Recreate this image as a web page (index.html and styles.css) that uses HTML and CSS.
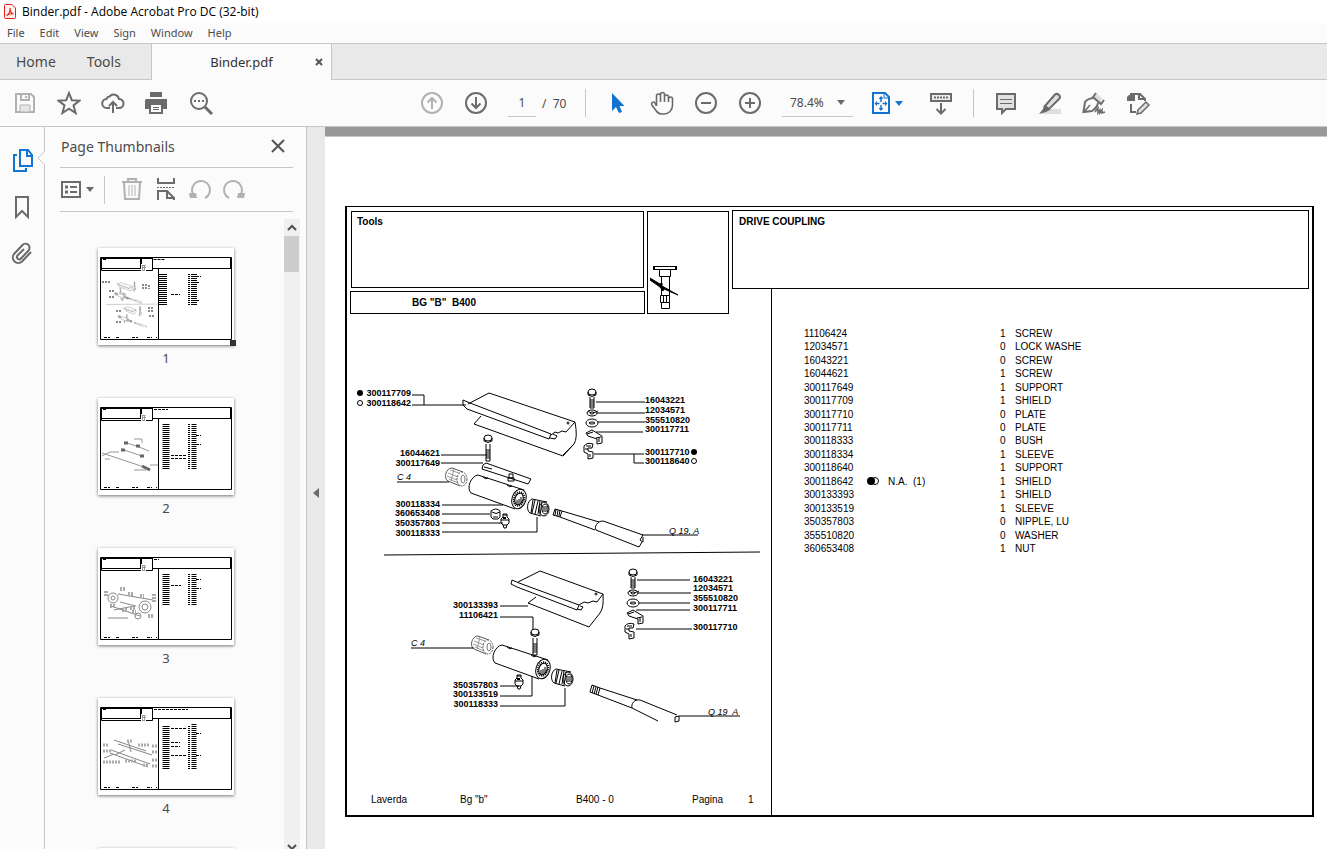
FILE: index.html
```html
<!DOCTYPE html>
<html lang="en">
<head>
    <meta charset="UTF-8">
    <meta name="viewport" content="width=device-width, initial-scale=1.0">
    <title>Binder.pdf - Adobe Acrobat Pro DC (32-bit)</title>
    <link rel="stylesheet" href="styles.css">
</head>
<body>

<header class="titlebar">
    <svg class="app-icon" width="12" height="15" viewBox="0 0 12 15" fill="none" stroke="#e2231a">
        <path d="M1.5 .5H8L11.5 4V13.5a1 1 0 0 1-1 1h-9a1 1 0 0 1-1-1v-12a1 1 0 0 1 1-1z" fill="#fff1f0"/>
        <path d="M2.5 11.5c2-1 4-4 3.500-7.500c0 3 1.500 5.500 3.500 6c-2-.5-5 0-7 1.500z" stroke-width="1.2"/>
    </svg>
    <span>Binder.pdf - Adobe Acrobat Pro DC (32-bit)</span>
</header>

<nav class="menubar">
    <button>File</button>
    <button>Edit</button>
    <button>View</button>
    <button>Sign</button>
    <button>Window</button>
    <button>Help</button>
</nav>

<div class="tabs">
    <button class="tab">Home</button>
    <button class="tab">Tools</button>
    <div class="tab-active">
        <span class="tab-name">Binder.pdf</span>
        <button class="tab-close" aria-label="Close tab">
            <svg width="8" height="8" viewBox="0 0 8 8" stroke="#555" stroke-width="2"><path d="M1 1L7 7M7 1L1 7"/></svg>
        </button>
    </div>
</div>

<div class="toolbar">
    <button class="tool off" aria-label="Save">
        <svg viewBox="0 0 24 24"><path d="M3 3H18L21 6V21H3z"/><path d="M8 3V9H16V3M13 5V7"/><path d="M7 21V14H17V21z" fill="#e6e6e6" stroke-width="1"/></svg>
    </button>
    <button class="tool" aria-label="Star">
        <svg viewBox="0 0 24 24"><path d="M12 2L14.800 9.200L22.500 9.600L16.500 14.400L18.600 22L12 17.700L5.400 22L7.500 14.400L1.500 9.600L9.200 9.200z"/></svg>
    </button>
    <button class="tool" aria-label="Upload">
        <svg viewBox="0 0 24 24"><path d="M9 17H6a4.500 4.500 0 0 1-.5-9a3.500 3.500 0 0 1 3-2.500a5.500 5.500 0 0 1 9.500 2.500a4.500 4.500 0 0 1 0 9h-3"/><path d="M12 22V11M8 15L12 11L16 15"/></svg>
    </button>
    <button class="tool" aria-label="Print">
        <svg viewBox="0 0 24 24"><path d="M5 1H17V6H5z" fill="#6b6b6b" stroke="none"/><path d="M1 8H22V18H18V14H4V18H0V9z" fill="#6b6b6b" stroke="none"/><path d="M5 13V22H17V13z" fill="#fbfbfb"/><path d="M8 16.500H14M8 18.500H14" stroke-width="1"/></svg>
    </button>
    <button class="tool" aria-label="Find">
        <svg viewBox="0 0 24 24"><circle cx="10" cy="10" r="8"/><path d="M16 16L23 23" stroke-width="3"/><path d="M5 10h2M9 10h2M13 10h2"/></svg>
    </button>

    <div class="tool-main">
        <button class="tool off" aria-label="Previous page">
            <svg viewBox="0 0 24 24"><circle cx="12" cy="12" r="10"/><path d="M12 18V7M7.500 11.500L12 7L16.500 11.500"/></svg>
        </button>
        <button class="tool" aria-label="Next page">
            <svg viewBox="0 0 24 24"><circle cx="12" cy="12" r="10"/><path d="M12 6V17M7.500 12.500L12 17L16.500 12.500"/></svg>
        </button>
        <input class="page-input" type="text" value="1" aria-label="Page number">
        <span class="page-total">/&nbsp; 70</span>
        <span class="divider"></span>
        <button class="tool" aria-label="Select">
            <svg viewBox="0 0 24 24"><path d="M6 2V20L10 16L13 22L16 21L13.500 15H18.500z" fill="#1473d0" stroke="none"/></svg>
        </button>
        <button class="tool" aria-label="Pan">
            <svg viewBox="0 0 24 24"><g stroke-width="1.600"><path d="M18.500 11V6a2 2 0 0 0-4 0v5M14.500 10V3.500a2 2 0 0 0-4 0V11M10.500 10.500V5a2 2 0 0 0-4 0v10"/><path d="M18.500 8a2 2 0 1 1 4 0v6.500a8.500 8.500 0 0 1-8.500 8.500h-1.500c-3 0-5-1-6.500-3.500L1.800 14a2 2 0 0 1 2.900-2.600L6.500 15"/></g></svg>
        </button>
        <button class="tool" aria-label="Zoom out">
            <svg viewBox="0 0 24 24"><circle cx="12" cy="12" r="10"/><path d="M7 12H17"/></svg>
        </button>
        <button class="tool" aria-label="Zoom in">
            <svg viewBox="0 0 24 24"><circle cx="12" cy="12" r="10"/><path d="M7 12H17M12 7V17"/></svg>
        </button>
        <div class="zoom-box">
            <select class="zoom" aria-label="Zoom level"><option>78.4%</option></select>
            <svg class="caret" viewBox="0 0 8 5"><path d="M0 0H8L4 5z"/></svg>
        </div>
        <button class="tool fit" aria-label="Fit page">
            <svg viewBox="0 0 24 24"><path d="M4 2H16L20 6V22H4z"/><path d="M15 2V7H20" stroke-width="1"/><path d="M12 8V11M12 14V17M8 12.500H10.500M13.500 12.500H16" stroke-width="1.500"/><path d="M12 5L14.500 8H9.500zM12 20L14.500 17H9.500zM5.500 12.500L8 10V15zM18.500 12.500L16 10V15z" fill="#1473d0" stroke="none"/></svg>
            <svg class="caret" viewBox="0 0 8 5"><path d="M0 0H8L4 5z"/></svg>
        </button>
        <button class="tool" aria-label="Scroll mode">
            <svg viewBox="0 0 24 24"><path d="M2 3H22V10H2z" fill="#eee"/><path d="M5 6.500H19" stroke-dasharray="2 1"/><path d="M12 12V22M7.500 18L12 22.500L16.500 18"/></svg>
        </button>
        <span class="divider"></span>
        <button class="tool" aria-label="Comment">
            <svg viewBox="0 0 24 24"><path d="M3 3H21V18H12L8 22V18H3z" fill="#e1e1e1"/><path d="M6 8.500H18M6 12.500H18" stroke-width="1"/></svg>
        </button>
        <button class="tool" aria-label="Highlight">
            <svg viewBox="0 0 24 24"><path d="M6 18H23V23H3z" fill="#dedede" stroke="none"/><path d="M7 15L17 3.500Q19 2 21 4Q23 6 21 8L11 18z" fill="#e1e1e1"/><path d="M6 14L12 19L8 21L1 23L5 18z" fill="#6b6b6b" stroke="none"/></svg>
        </button>
        <button class="tool" aria-label="Sign">
            <svg viewBox="0 0 24 24"><path d="M14 2L21 8L18 11L11 5z" fill="#dedede" stroke="none"/><path d="M14 2L11 6L19 13L22 9"/><path d="M11 7Q5 8 3 11L1.500 21L10 20Q15 17 16 12"/><path d="M2 21L8 14" stroke-width="1.500"/><path d="M13 21l3-4v5l2-3v3l2-3v3l3-1" stroke-width="1.500"/></svg>
        </button>
        <button class="tool" aria-label="More tools">
            <svg viewBox="0 0 24 24"><path d="M1 6L3 4H9V10H1z" fill="#6b6b6b" stroke="none"/><path d="M4 3H14L19 8V10M13 2V8H19M5 13V21H10"/><path d="M12 19L20 11L23 14L15 22L11 23z" fill="#e1e1e1" stroke-width="1.500"/></svg>
        </button>
    </div>
</div>

<main class="workspace">
    <nav class="rail">
        <button aria-label="Page thumbnails">
            <svg viewBox="0 0 24 24"><path d="M9 1H17L21 6V17H9z" /><path d="M16 1V7H21M6 6H3V22H15V19"/></svg>
        </button>
        <button aria-label="Bookmarks">
            <svg viewBox="0 0 24 24"><path d="M5 2H17V22L11 16L5 22z"/></svg>
        </button>
        <button aria-label="Attachments">
            <svg viewBox="0 0 24 24"><path d="M20 11L11 20.500a5.500 5.500 0 0 1-8-7.500L11.500 4a4 4 0 0 1 6 5.500L10 17.500a2.300 2.300 0 0 1-3.500-3L13 8"/></svg>
        </button>
        <svg class="notch" viewBox="0 0 8 14"><path d="M8 0L1 7L8 14" fill="#fbfbfb" stroke="#c6c6c6" stroke-width="1"/></svg>
    </nav>

    <aside class="panel">
        <div class="panel-head">
            <h2>Page Thumbnails</h2>
            <button aria-label="Close panel">
                <svg width="14" height="14" viewBox="0 0 14 14" stroke="#555" stroke-width="2"><path d="M1 1L13 13M13 1L1 13"/></svg>
            </button>
        </div>
        <div class="panel-tools">
            <button class="options" aria-label="Options">
                <svg viewBox="0 0 24 24"><path d="M2 4H20V19H2z"/><path d="M5 9H8M5 14H8" stroke-width="3"/><path d="M10 9H17M10 14H17"/></svg>
                <svg class="caret" viewBox="0 0 8 5"><path d="M0 0H8L4 5z"/></svg>
            </button>
            <span class="divider"></span>
            <button class="off" aria-label="Delete pages">
                <svg viewBox="0 0 24 24"><path d="M2 4H22M8 4V1H16V4M4 4L5 21H19L20 4"/><path d="M9 7V18M12 7V18M15 7V18" stroke-width="1"/></svg>
            </button>
            <button aria-label="Extract pages">
                <svg viewBox="0 0 24 24"><path d="M4 0V5H20V0M4 22V13H13L20 20V22M13 13V20H20"/><path d="M3 9.500H21" stroke-width="1" stroke-dasharray="2 1"/></svg>
            </button>
            <button class="off" aria-label="Rotate left">
                <svg viewBox="0 0 24 24"><path d="M17 20A9 9 0 1 0 5 16"/><path d="M1 15L8 15L9 20L2 20z" fill="#b1b1b1" stroke="none"/></svg>
            </button>
            <button class="off" aria-label="Rotate right">
                <svg viewBox="0 0 24 24"><path d="M7 20A9 9 0 1 1 19 16"/><path d="M23 15L16 15L15 20L22 20z" fill="#b1b1b1" stroke="none"/></svg>
            </button>
        </div>

        <div class="thumbs">
            <ol class="thumb-list">
                <li>
                    <div class="thumb current">
                        <svg viewBox="0 0 136 97">
                            <use href="#sheet"/>
                            <g transform="translate(-44 -19) scale(.136)" stroke="#888" stroke-width="3" fill="none"><use href="#art"/></g>
                            <path d="M65 26V57" stroke="#000" stroke-width="8" stroke-dasharray="1 1"/>
                            <path d="M91 26V57" stroke="#000" stroke-width="2" stroke-dasharray="1 1"/>
                            <path d="M96 26V57" stroke="#000" stroke-width="6" stroke-dasharray="1 1"/>
                            <path d="M73 46.500h9M98 28.500h5M99 34.500h2M99 52.500h2" stroke="#000" stroke-dasharray="3 1"/>
                            <path d="M4 34h8M11 43h6M11 49h6M45 36v6M48 36v6M51 37v4M18 63h6M18 74h6M51 59v5M54 59v5M51 68h5" stroke="#888" stroke-width="2" stroke-dasharray="2 1"/>
                            <path d="M55.500 11.500h12" stroke="#000" stroke-dasharray="3 1"/>
                        </svg>
                    </div>
                    <span>1</span>
                </li>
                <li>
                    <div class="thumb">
                        <svg viewBox="0 0 136 97">
                            <use href="#sheet"/>
                            <path d="M68 26V71" stroke="#000" stroke-width="7" stroke-dasharray="1 1"/>
                            <path d="M91 26V71" stroke="#000" stroke-width="2" stroke-dasharray="1 1"/>
                            <path d="M96 26V71" stroke="#000" stroke-width="5" stroke-dasharray="1 1"/>
                            <path d="M73 57.500h16M73 60.500h16M98 37.500h5M98 46.500h5M56 11.500h14" stroke="#000" stroke-dasharray="3 1"/>
                            <g fill="none" stroke="#999"><path d="M4 55L52 71M26 44L41 49L51 53M23 51L44 58M4 58l8-4h9M52 67h8M36 41h8v4M36 72h12M7 61h5"/><path d="M26 45h4M38 48h4M23 52h4M42 58h4M44 68l8 4" stroke="#666" stroke-width="3"/></g>
                        </svg>
                    </div>
                    <span>2</span>
                </li>
                <li>
                    <div class="thumb">
                        <svg viewBox="0 0 136 97">
                            <use href="#sheet"/>
                            <path d="M68 26V57" stroke="#000" stroke-width="7" stroke-dasharray="1 1"/>
                            <path d="M91 26V57" stroke="#000" stroke-width="2" stroke-dasharray="1 1"/>
                            <path d="M96 26V57" stroke="#000" stroke-width="5" stroke-dasharray="1 1"/>
                            <path d="M73 37.500h10M98 31.500h5M98 40.500h5M56 11.500h5" stroke="#000" stroke-dasharray="3 1"/>
                            <g fill="none" stroke="#888"><circle cx="15" cy="50" r="5"/><circle cx="15" cy="50" r="2"/><circle cx="47" cy="59" r="6"/><circle cx="47" cy="59" r="3"/><circle cx="40" cy="68" r="3"/><path d="M20 46L55 52M13 58L42 68M22 54L38 58M16 62l20-4M10 70h20"/><path d="M8 43v5M22 41h6M30 46h6M42 48h4M56 46v8M12 58h6M24 62h6M32 60h5M50 68h5M34 64h4" stroke-width="4" stroke="#aaa" stroke-dasharray="2 1"/></g>
                        </svg>
                    </div>
                    <span>3</span>
                </li>
                <li>
                    <div class="thumb">
                        <svg viewBox="0 0 136 97">
                            <use href="#sheet"/>
                            <path d="M68 28V71" stroke="#000" stroke-width="7" stroke-dasharray="1 1"/>
                            <path d="M91 28V71" stroke="#000" stroke-width="2" stroke-dasharray="1 1"/>
                            <path d="M96 26V71" stroke="#000" stroke-width="5" stroke-dasharray="1 1"/>
                            <path d="M73 30.500h16M73 44.500h9M73 48.500h9M73 57.500h16M98 35.500h5M98 57.500h5M56 11.500h34" stroke="#000" stroke-dasharray="3 1"/>
                            <g fill="none" stroke="#888"><path d="M16 42L48 53M20 46L54 57M13 52L52 66M12 55L50 69M30 42l3 12M6 60l10-4M17 57l10-5"/><path d="M5 47h5M5 53h8M5 64h18M29 43h5M40 47h11M54 48h5M54 54h5M54 62h5M54 68h5M27 63h12M45 67h6" stroke-width="3" stroke="#aaa" stroke-dasharray="2 1"/></g>
                        </svg>
                    </div>
                    <span>4</span>
                </li>
                <li>
                    <div class="thumb">
                        <svg viewBox="0 0 136 97"><use href="#sheet"/></svg>
                    </div>
                </li>
            </ol>
            <div class="scrollbar">
                <svg width="16" height="17" viewBox="0 0 16 17" fill="none" stroke="#505050" stroke-width="2"><path d="M4 11L8 7L12 11"/></svg>
                <div class="scroll-thumb"></div>
                <svg class="scroll-down" width="16" height="6" viewBox="0 0 16 6" fill="none" stroke="#505050" stroke-width="2"><path d="M4 2L8 6L12 2"/></svg>
            </div>
        </div>
    </aside>

    <button class="splitter" aria-label="Collapse panel">
        <svg width="6" height="10" viewBox="0 0 6 10" fill="#6b6b6b"><path d="M6 0V10L0 5z"/></svg>
    </button>

    <section class="document">
        <article class="page">
            <div class="sheet">
                <div class="head-left">
                    <div class="titles">
                        <div class="box group">Tools</div>
                        <div class="box model">BG "B"&nbsp; B400</div>
                    </div>
                    <div class="box symbol">
                        <svg width="30" height="44" viewBox="0 0 30 44" fill="none" stroke="#000" stroke-width="1">
                            <path d="M3.500 1.500H26.500V4.500H3.500z"/><path d="M4 1V5M26 1V5" stroke-width="2"/>
                            <path d="M9.500 4.500V11.500H20.500V4.500M11.500 11.500V30.500M19.500 11.500V30.500M10.500 30.500H19.500V37.500H10.500zM11.500 37.500V43.500H19.500V37.500M13.500 31V37M16.500 31V37"/>
                            <path d="M0 13L10 19L12 18V21L28 30L14 24L13 26L10 22L0 15z" fill="#000"/>
                        </svg>
                    </div>
                </div>
                <div class="box head-right">DRIVE COUPLING</div>

                <div class="drawing">
                    <!-- exploded view, in the coordinates of the sheet -->
                    <svg width="424" height="430" viewBox="347 330 424 430" fill="none" stroke="#000" stroke-width="1">
                        <defs>
                            <g id="screws">
                                <ellipse cx="592" cy="392" rx="4" ry="3"/><path d="M588 392v3q4 3 8 0v-3"/>
                                <path d="M590 397V408H594V397M590 400h4M590 402h4M590 404h4M590 406h4"/>
                                <ellipse cx="592" cy="413" rx="5" ry="3"/><ellipse cx="592" cy="413" rx="2" ry="1"/><path d="M593 413l5-2M588 411l3 2"/>
                                <ellipse cx="592" cy="423" rx="6" ry="4"/><ellipse cx="592" cy="423" rx="3" ry="1"/>
                                <path d="M586 433L592 430L602 436V443L597 444V439L588 436z"/><path d="M587 434l6-2M599 438v4M596 438l5-1"/>
                                <path d="M584 446Q587 442 593 444L592 448L588 448V451L593 452V458L588 459V454L584 452z"/><path d="M586 446h5M590 454v3M585 449h3"/>
                            </g>
                            <g id="sleeve">
                                <path d="M478 475L524 490M471 493L515 509M478 475C471 476 466 488 471 493"/>
                                <g transform="rotate(18 519 499)">
                                    <ellipse cx="519" cy="499" rx="7" ry="10"/>
                                    <ellipse cx="519" cy="499" rx="5" ry="7" stroke-dasharray="1 1" stroke-width="2"/>
                                    <ellipse cx="519" cy="499" rx="4" ry="6"/>
                                </g>
                                <path d="M483 477q3 3 5 1M507 485q3 3 5 1M517 500v5M519 499v6M521 497v6"/>
                                <path d="M532 499L547 502M530 513L541 516M532 499C527 501 526 510 530 513M533 500l-2 13M535 500l-3 13M538 501l-3 13M540 501l-2 13M542 502l-2 13"/>
                                <ellipse cx="544" cy="509" rx="5" ry="7"/><ellipse cx="545" cy="509" rx="3" ry="5"/><path d="M544 506v6M546 506v6"/>
                            </g>
                            <g id="gear">
                                <path d="M452 468L463 472M448 481L460 486M452 468C446 468 443 478 448 481" stroke="#555"/>
                                <path d="M450 470l9 3M448 473l10 4M447 476l10 4M449 479l9 4M454 469l-3 12" stroke="#999"/>
                                <ellipse cx="462" cy="479" rx="5" ry="7" stroke="#555" stroke-dasharray="2 1"/><ellipse cx="463" cy="479" rx="2" ry="4" stroke="#777"/>
                            </g>
                            <g id="bolt">
                                <ellipse cx="488" cy="438" rx="4" ry="3"/><path d="M484 438v3q4 3 8 0v-3M486 444V461H490V444M486 450h4M486 452h4M486 454h4M486 456h4M486 458h4"/>
                            </g>
                            <g id="nipple">
                                <path d="M503 514h4v3l2 2v4l-2 2h-4l-2-2v-4l2-2zM503 525l1 3h2l1-3M501 520h8M503 515h4"/><path d="M503 518h3" stroke-width="2"/>
                            </g>
                        </defs>

                        <g id="art">
                            <!-- upper assembly -->
                            <path d="M468 404L489 393L575 422Q578 438 574 444L563 456L474 424L481 416"/>
                            <path d="M463 400L470 403L551 434L549 439L467 409L463 405z"/>
                            <path d="M551 435l4-3 3 1 4-2 4 1 9-10M563 455l11-11M553 434l4 2-2 3-5-1" />
                            <circle cx="568" cy="423" r="1"/>
                            <path d="M483 465L486 463L531 479L528 484L482 469zM484 467l8 2"/>
                            <path d="M509 474h4v4h-4zM508 478h6v3h-6z"/>
                            <use href="#bolt"/><use href="#gear"/><use href="#sleeve"/><use href="#screws"/><use href="#nipple"/>
                            <path d="M491 511q5-4 9 0v6l-2 2h-5l-2-2zM492 512q4 3 8 0M493 517h5"/>
                            <path d="M555 509L562 511L560 517L553 515zM556 509l-1 6M558 510l-1 6M560 510l-1 6"/>
                            <path d="M562 511L599 522M560 517L595 530M603 521C597 521 594 527 596 530M603 521L643 535M596 530L639 547L642 542M643 535l-3 5 3 2v-5"/>

                            <!-- lower assembly -->
                            <path d="M518 582L540 571L603 594Q604 608 600 613L589 627L528 603L536 597"/>
                            <path d="M512 580L519 583L579 605L577 610L517 587L511 584z"/>
                            <path d="M579 605l5-3 4 1 5-2 4 1 6-8M580 606l3 1-2 3-4-1"/>
                            <circle cx="596" cy="594" r="1"/>
                            <use href="#bolt" x="47" y="194"/><use href="#gear" x="26" y="168"/><use href="#sleeve" x="24" y="170"/><use href="#screws" x="41" y="180"/><use href="#nipple" x="14" y="161"/>
                            <path d="M592 685L600 688L598 695L590 692zM594 686l-2 7M596 687l-2 7M598 687l-2 7"/>
                            <path d="M600 688L637 700M598 695L632 708M640 700C634 699 631 704 632 708M640 700L677 715M632 708L658 721M675 717l4-1v5l-4 1z"/>
                            <path d="M384 555L760 552"/>
                        </g>

                        <!-- leader lines -->
                        <path d="M412 395H424V405M412 405H466M441 455H487M441 463H483M397 482H449M442 505H503M442 514H490M442 523H503M442 532H537V517"/>
                        <path d="M596 402H645M597 413H645M598 422H645M596 432H643M594 454H644M634 454V463H644M642 535H698"/>
                        <path d="M500 606H528M500 617H533V629M411 648H474M500 686H519M500 696H532V676M500 706H565V688M637 580H690M638 593H691M639 603H690M636 610H690M636 629H692M679 716H740"/>

                        <g class="labels end">
                            <text x="411" y="396">300117709</text>
                            <text x="411" y="406">300118642</text>
                            <text x="440" y="456">16044621</text>
                            <text x="440" y="466">300117649</text>
                            <text x="440" y="507">300118334</text>
                            <text x="440" y="516">360653408</text>
                            <text x="440" y="526">350357803</text>
                            <text x="440" y="536">300118333</text>
                            <text x="498" y="608">300133393</text>
                            <text x="498" y="618">11106421</text>
                            <text x="498" y="688">350357803</text>
                            <text x="498" y="697">300133519</text>
                            <text x="498" y="707">300118333</text>
                        </g>
                        <g class="labels">
                            <text x="645" y="403">16043221</text>
                            <text x="645" y="413">12034571</text>
                            <text x="645" y="423">355510820</text>
                            <text x="645" y="432">300117711</text>
                            <text x="645" y="455">300117710</text>
                            <text x="645" y="464">300118640</text>
                            <text x="693" y="582">16043221</text>
                            <text x="693" y="591">12034571</text>
                            <text x="693" y="601">355510820</text>
                            <text x="693" y="611">300117711</text>
                            <text x="693" y="630">300117710</text>
                        </g>
                        <g class="refs">
                            <text x="397" y="480">C 4</text>
                            <text x="669" y="534">Q 19. A</text>
                            <text x="411" y="646">C 4</text>
                            <text x="708" y="715">Q 19&nbsp; A</text>
                        </g>
                        <circle cx="360" cy="393" r="3" fill="#000" stroke="none"/>
                        <circle cx="360" cy="403" r="2.500"/>
                        <circle cx="694" cy="452" r="3" fill="#000" stroke="none"/>
                        <circle cx="694" cy="461" r="2.500"/>
                    </svg>
                    <footer class="sheet-foot">
                        <span>Laverda</span>
                        <span>Bg "b"</span>
                        <span>B400 - 0</span>
                        <span>Pagina</span>
                        <span>1</span>
                    </footer>
                </div>

                <div class="parts">
                    <table>
                        <tr><td>11106424</td><td></td><td>1</td><td>SCREW</td></tr>
                        <tr><td>12034571</td><td></td><td>0</td><td>LOCK WASHE</td></tr>
                        <tr><td>16043221</td><td></td><td>0</td><td>SCREW</td></tr>
                        <tr><td>16044621</td><td></td><td>1</td><td>SCREW</td></tr>
                        <tr><td>300117649</td><td></td><td>1</td><td>SUPPORT</td></tr>
                        <tr><td>300117709</td><td></td><td>1</td><td>SHIELD</td></tr>
                        <tr><td>300117710</td><td></td><td>0</td><td>PLATE</td></tr>
                        <tr><td>300117711</td><td></td><td>0</td><td>PLATE</td></tr>
                        <tr><td>300118333</td><td></td><td>0</td><td>BUSH</td></tr>
                        <tr><td>300118334</td><td></td><td>1</td><td>SLEEVE</td></tr>
                        <tr><td>300118640</td><td></td><td>1</td><td>SUPPORT</td></tr>
                        <tr><td>300118642</td><td><svg class="mark" width="12" height="8" viewBox="0 0 12 8"><circle cx="8" cy="4" r="3.500" fill="#fff" stroke="#000"/><circle cx="4" cy="4" r="4"/></svg>N.A.&nbsp; (1)</td><td>1</td><td>SHIELD</td></tr>
                        <tr><td>300133393</td><td></td><td>1</td><td>SHIELD</td></tr>
                        <tr><td>300133519</td><td></td><td>1</td><td>SLEEVE</td></tr>
                        <tr><td>350357803</td><td></td><td>0</td><td>NIPPLE, LU</td></tr>
                        <tr><td>355510820</td><td></td><td>0</td><td>WASHER</td></tr>
                        <tr><td>360653408</td><td></td><td>1</td><td>NUT</td></tr>
                    </table>
                </div>
            </div>
        </article>
    </section>
</main>

<!-- frame shared by all the thumbnails -->
<svg class="defs" width="0" height="0">
    <defs>
        <g id="sheet" fill="none" stroke="#000">
            <path d="M2.500 9.500H133.500V91.500H2.500zM60.500 21V91M54 20.500H133M3.500 10V22.500H54.500V10M3 20.500H43M132.500 10V21M4 10.500H54"/>
            <path d="M43 10V21" stroke-width="2"/>
            <path d="M43 16h5v7h-5z" fill="#fff" stroke="none"/><path d="M43.500 17.500h4M44.500 18v4M46.500 18v4M44 19.500h4M44 22.500h3" stroke="#999"/>
            <path d="M5 11.500h4M12 22.500h9M6 89.500h6M18 89.500h4M34 89.500h6M49 89.500h5M58 89.500h1" stroke-dasharray="3 1"/>
        </g>
    </defs>
</svg>

</body>
</html>
```
FILE: styles.css
```css
* {
    box-sizing: border-box;
}
body {
    display: flex;
    flex-direction: column;
    height: 100vh;
    margin: 0;
    overflow: hidden;
    font-family: "Noto Sans", "Open Sans", sans-serif;
    font-size: 11px;
    color: #4b4b4b;
    background-color: #fbfbfb;
}
button {
    display: flex;
    align-items: center;
    justify-content: center;
    padding: 0;
    border: none;
    background: none;
    font: inherit;
    color: inherit;
    cursor: pointer;
}
.titlebar {
    display: flex;
    align-items: center;
    flex: none;
    gap: 6px;
    height: 23px;
    padding-left: 4px;
    background-color: #fff;
    font-family: "Open Sans", "Noto Sans", sans-serif;
    font-size: 12px;
    color: #000;
}
.app-icon {
    flex: none;
}
.menubar {
    display: flex;
    align-items: center;
    flex: none;
    gap: 15px;
    height: 20px;
    padding: 0 0 2px 7px;
}
.tabs {
    display: flex;
    flex: none;
    height: 37px;
    border-top: 1px solid #c6c6c6;
    border-bottom: 1px solid #c6c6c6;
    background-color: #e9e9e9;
    font-size: 14px;
}
.tab {
    padding: 0 15px 0 16px;
}
.tab-active {
    display: flex;
    align-items: center;
    width: 181px;
    height: 36px;
    margin-left: 15px;
    padding-right: 8px;
    border-left: 1px solid #c6c6c6;
    border-right: 1px solid #c6c6c6;
    background-color: #fbfbfb;
    font-size: 13px;
    color: #323232;
}
.tab-name {
    flex: 1;
    padding-left: 16px;
    text-align: center;
}
.toolbar {
    display: flex;
    align-items: center;
    flex: none;
    height: 47px;
    padding-left: 3px;
    border-bottom: 1px solid #c6c6c6;
}
.tool-main {
    display: flex;
    align-items: center;
    margin-left: 187px;
}
.tool {
    width: 44px;
    height: 44px;
}
.tool svg,
.rail svg,
.panel-tools svg {
    flex: none;
    width: 24px;
    height: 24px;
    fill: none;
    stroke: #6b6b6b;
    stroke-width: 2;
}
.toolbar .off svg,
.panel-tools .off svg {
    stroke: #b1b1b1;
}
.tool .caret,
.panel-tools .caret,
.caret {
    width: 8px;
    height: 5px;
    fill: #6b6b6b;
    stroke: none;
}
.page-input {
    width: 28px;
    height: 28px;
    margin-left: 10px;
    padding: 0;
    border: none;
    border-bottom: 1px solid #c6c6c6;
    background: none;
    font: inherit;
    font-size: 12px;
    text-align: center;
    color: #4b4b4b;
}
.page-total {
    width: 49px;
    padding-left: 6px;
    font-size: 12px;
}
.divider {
    width: 1px;
    height: 28px;
    margin-right: 10px;
    background-color: #c6c6c6;
}
.zoom-box {
    display: flex;
    align-items: center;
    width: 71px;
    height: 28px;
    margin-left: 10px;
    padding-right: 8px;
    border-bottom: 1px solid #c6c6c6;
}
.zoom {
    flex: 1;
    height: 26px;
    padding: 0 0 0 8px;
    appearance: none;
    border: none;
    background: none;
    font: inherit;
    font-size: 12px;
    color: #4b4b4b;
}
.fit {
    width: 66px;
    gap: 2px;
}
.tool-main .fit svg {
    stroke: #1473d0;
}
.tool-main .fit .caret {
    fill: #1473d0;
    stroke: none;
}
.tool-main .fit + .tool + .divider {
    margin-left: 10px;
    margin-right: 10px;
}
.workspace {
    display: flex;
    flex: 1;
    min-height: 0;
}
.rail {
    position: relative;
    display: flex;
    flex-direction: column;
    align-items: center;
    gap: 22px;
    width: 45px;
    padding: 22px 0 0 2px;
    border-right: 1px solid #c6c6c6;
}
.rail button:first-child svg {
    stroke: #1473d0;
}
.rail .notch {
    position: absolute;
    top: 24px;
    right: -1px;
    width: 8px;
    height: 14px;
}
.panel {
    display: flex;
    flex-direction: column;
    width: 261px;
}
.panel-head {
    display: flex;
    align-items: center;
    justify-content: space-between;
    height: 41px;
    margin: 0 13px 0 15px;
    padding: 0 8px 2px 1px;
    border-bottom: 1px solid #c6c6c6;
}
.panel-head h2 {
    margin: 0;
    font-size: 14px;
    font-weight: normal;
}
.panel-tools {
    display: flex;
    align-items: center;
    flex: none;
    gap: 10px;
    height: 44px;
    margin: 0 13px 0 15px;
    border-bottom: 1px solid #c6c6c6;
}
.panel-tools .divider {
    margin-right: 5px;
}
.options {
    gap: 2px;
}
.thumbs {
    display: flex;
    flex: 1;
    min-height: 0;
    padding: 7px 6px 0 0;
}
.thumb-list {
    display: flex;
    flex-direction: column;
    align-items: center;
    flex: 1;
    gap: 30px;
    margin: 0;
    padding: 29px 0 0 3px;
    overflow: hidden;
    list-style: none;
    font-size: 13px;
}
.thumb-list li {
    display: flex;
    flex-direction: column;
    align-items: center;
    flex: none;
    height: 120px;
    line-height: 26px;
}
.thumb {
    position: relative;
    height: 97px;
    background-color: #fff;
    box-shadow: 0 1px 3px rgba(0, 0, 0, .55);
}
.thumb svg {
    display: block;
    width: 136px;
    height: 97px;
}
.current::after {
    content: "";
    position: absolute;
    right: -2px;
    bottom: -1px;
    width: 6px;
    height: 6px;
    background-color: #323232;
}
.scrollbar {
    display: flex;
    flex-direction: column;
    width: 16px;
    background-color: #f0f0f0;
}
.scroll-thumb {
    width: 15px;
    height: 36px;
    background-color: #cdcdcd;
}
.scroll-down {
    margin-top: auto;
}
.splitter {
    width: 19px;
    padding-top: 10px;
    border-left: 1px solid #c6c6c6;
    background-color: #e9e9e9;
}
.document {
    display: flex;
    flex: 1;
    padding-top: 9px;
    background-color: #999;
}
.page {
    display: flex;
    flex: 1;
    padding: 69px 13px 32px 20px;
    border-top: 1px solid #c6c6c6;
    background-color: #fff;
    font-family: "Liberation Sans", Arial, sans-serif;
    font-size: 10px;
    color: #000;
}
.sheet {
    display: grid;
    flex: 1;
    grid-template-columns: 385px 40px 1fr;
    grid-template-rows: 82px 1fr;
    border: 2px solid #000;
    border-top-width: 1px;
}
.box {
    border: 1px solid #000;
    font-weight: bold;
}
.head-left {
    display: flex;
    grid-area: 1 / 1 / 3 / 2;
    align-self: start;
    padding: 4px 3px 0 3px;
}
.titles {
    flex: 1;
}
.group {
    height: 77px;
    margin: 0 1px 3px 1px;
    padding: 4px 5px;
}
.model {
    height: 23px;
    padding-left: 61px;
    line-height: 21px;
}
.symbol {
    display: flex;
    align-items: flex-end;
    width: 82px;
    height: 103px;
    margin-left: 2px;
    padding: 0 0 4px 2px;
}
.head-right {
    grid-area: 1 / 2 / 2 / 4;
    margin: 3px 3px 0 0;
    padding: 5px 6px;
}
.drawing {
    display: flex;
    flex-direction: column;
    justify-content: space-between;
    grid-area: 2 / 1 / 3 / 3;
    padding-top: 41px;
    border-right: 1px solid #000;
}
.labels {
    font-size: 9px;
    font-weight: bold;
    fill: #000;
    stroke: none;
}
.end {
    text-anchor: end;
}
.refs {
    font-size: 9px;
    font-style: italic;
    fill: #000;
    stroke: none;
}
.sheet-foot {
    display: grid;
    grid-template-columns: 89px 116px 116px 56px 1fr;
    padding: 0 0 10px 24px;
}
.parts {
    padding: 38px 0 0 32px;
}
table {
    height: 229px;
    border-collapse: collapse;
}
td {
    padding: 0;
    line-height: 12px;
}
td:nth-child(1) {
    width: 63px;
}
td:nth-child(2) {
    width: 133px;
}
td:nth-child(3) {
    width: 15px;
}
.mark {
    margin-right: 9px;
}
.defs {
    position: absolute;
}
```
